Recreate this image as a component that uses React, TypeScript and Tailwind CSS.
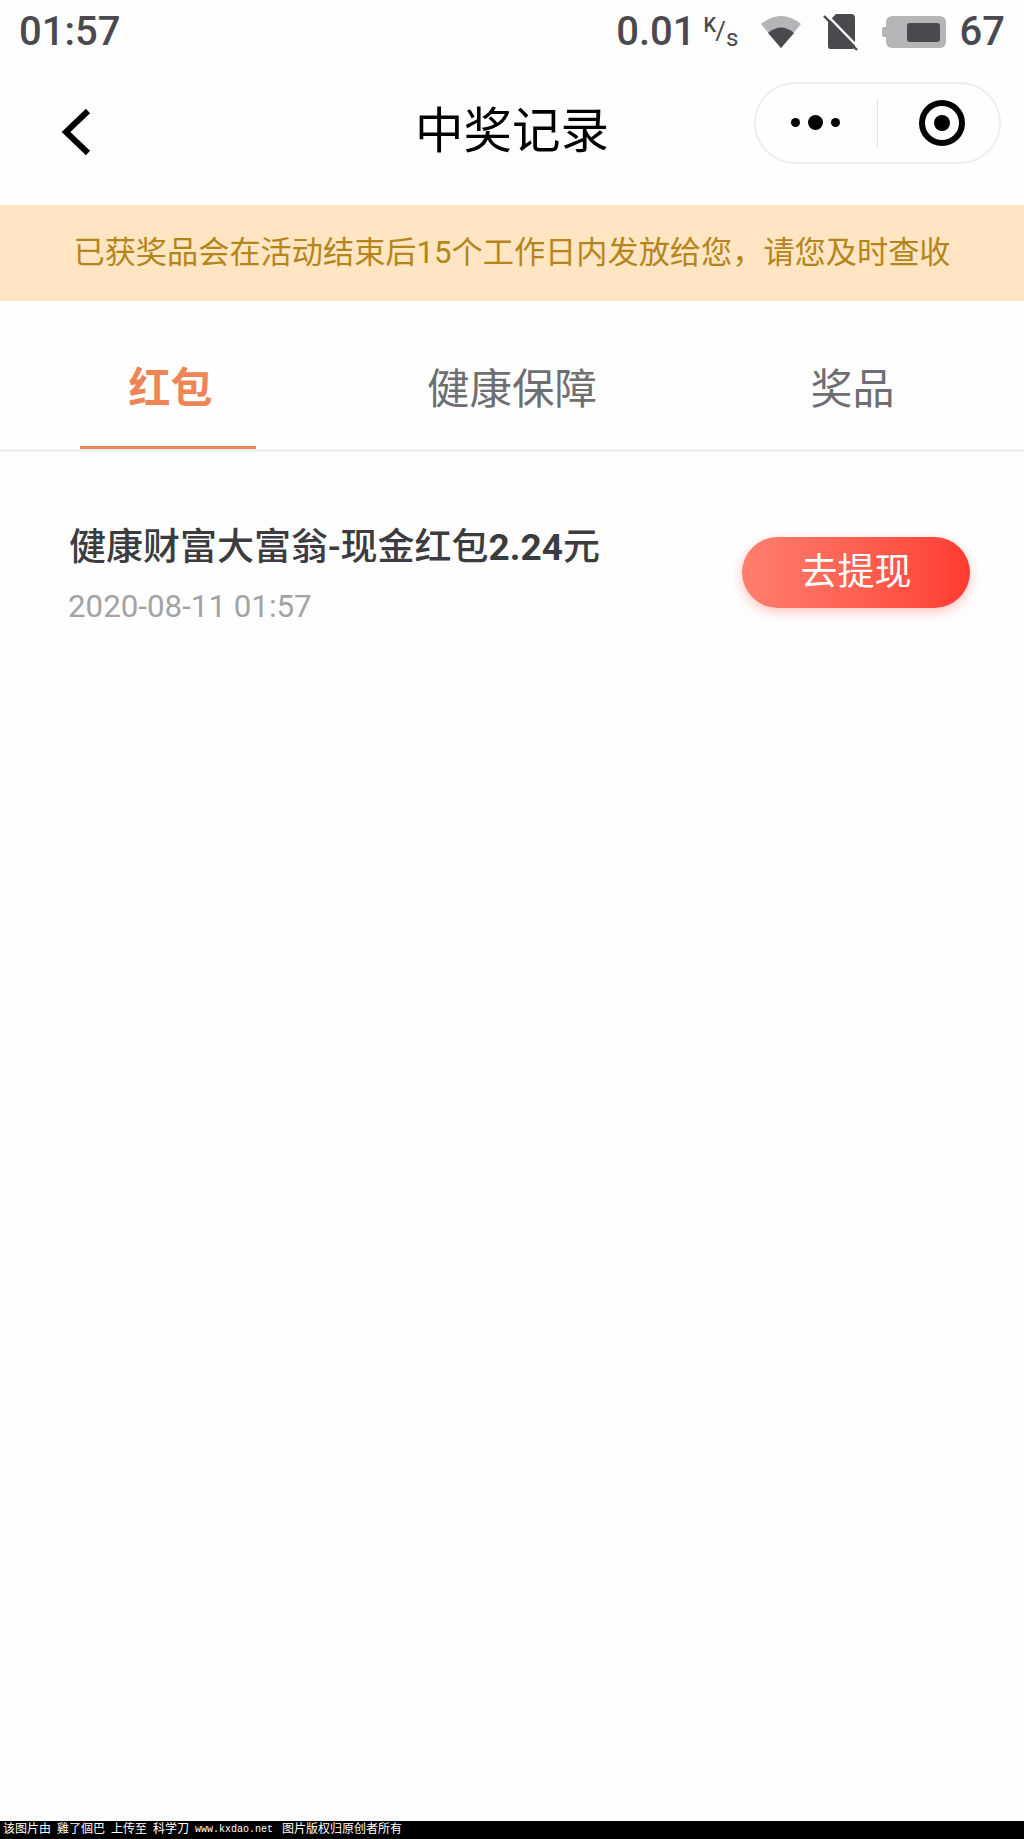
const cjk = "font-['Roboto','Noto_Sans_CJK_SC',sans-serif]";

function StatusBar() {
  return (
    <div className="flex h-[60px] items-center justify-between pl-[19px] pr-[19px] pt-[4px] text-[#4a4a4e]">
      <span className="text-[40px] font-medium leading-none">01:57</span>
      <div className="flex items-center">
        <span className="text-[40px] font-medium leading-none">0.01</span>
        <span className="ml-[8px] flex h-[32px] w-[36px] items-start font-medium leading-none">
          <span className="mt-[-1px] text-[20px]">K</span>
          <span className="mt-[2px] ml-[-1px] text-[26px] font-normal">/</span>
          <span className="mt-[10px] text-[24px] font-normal">s</span>
        </span>
        <svg className="ml-[20px]" width="42" height="36" viewBox="0 0 42 36">
          <path d="M1 10 Q21 -6 41 10 L21 34 Z" fill="#b5b4b6" />
          <path d="M8 19 Q21 8 34 19 L21 34 Z" fill="#4a4a4e" />
        </svg>
        <svg className="ml-[20px]" width="38" height="38" viewBox="0 0 38 38">
          <path d="M14 1 H29 Q33 1 33 5 V33 Q33 36 30 36 H8 Q6 36 6 33 V9 Z" fill="#4a4a4e" />
          <path d="M4 1 L36 34" stroke="#fff" strokeWidth="2.5" />
          <path d="M2 3 L35 37" stroke="#4a4a4e" strokeWidth="2.5" />
        </svg>
        <svg className="ml-[22px]" width="64" height="32" viewBox="0 0 64 32">
          <rect x="0" y="11" width="6" height="10" rx="2" fill="#b5b4b6" />
          <rect x="4" y="0" width="60" height="32" rx="6" fill="#b5b4b6" />
          <rect x="25" y="7" width="33" height="19" rx="3" fill="#4a4a4e" />
        </svg>
        <span className="ml-[14px] text-[40px] font-medium leading-none">67</span>
      </div>
    </div>
  );
}

function NavBar() {
  return (
    <div className="grid h-[145px] grid-cols-[1fr_auto_1fr] items-center">
      <div className="pl-[60px]">
        <svg className="mb-[2px] block" width="32" height="48" viewBox="0 0 32 48" fill="none">
          <path d="M28 3 L6 24 L28 45" stroke="#000" strokeWidth="6" />
        </svg>
      </div>
      <div className="mt-[-1px] text-[48.5px] leading-none text-black">中奖记录</div>
      <div className="flex justify-end pr-[23px]">
        <div className="mb-[20px] flex h-[82px] w-[247px] items-center rounded-full border-2 border-[#eeeeee]">
          <div className="flex w-[121px] items-center justify-center gap-[8px] pr-[3px]">
            <span className="h-[9px] w-[9px] rounded-full bg-black" />
            <span className="h-[15px] w-[15px] rounded-full bg-black" />
            <span className="h-[9px] w-[9px] rounded-full bg-black" />
          </div>
          <div className="h-[48px] w-[1px] bg-[#e2e2e2]" />
          <div className="flex flex-1 items-center justify-center pl-[6px]">
            <div className="flex h-[46px] w-[46px] items-center justify-center rounded-full border-[6px] border-black">
              <span className="h-[16px] w-[16px] rounded-full bg-black" />
            </div>
          </div>
        </div>
      </div>
    </div>
  );
}

function Tabs() {
  return (
    <div className="flex h-[151px] border-b-[3px] border-[#f0f0f2]">
      <div className="flex w-[336px] flex-col items-center">
        <div className="flex h-[148px] w-[176px] items-center justify-center border-b-[3px] border-[#ef8557] pl-[5px] pt-[30px] text-[42px] font-bold leading-none text-[#ef8557]">
          红包
        </div>
      </div>
      <div className="flex w-[352px] items-center justify-center pt-[30px] text-[42.5px] leading-none text-[#6e6e73]">健康保障</div>
      <div className="flex w-[336px] items-center justify-center pr-[7px] pt-[30px] text-[42px] leading-none text-[#6e6e73]">奖品</div>
    </div>
  );
}

function Row() {
  return (
    <div className="flex items-start justify-between pl-[69px] pr-[54px] pt-[69px]">
      <div>
        <div className="text-[37px] font-medium leading-[54px] text-[#3c3c40]">
          健康财富大富翁-现金红包<span className="font-bold">2.24</span>元
        </div>
        <div className="mt-[12px] ml-[-1px] text-[31.3px] leading-[40px] text-[#a3a3a6]">2020-08-11 01:57</div>
      </div>
      <div className="mt-[16px] flex h-[71px] w-[228px] items-center justify-center rounded-full bg-gradient-to-r from-[#ff7e6f] to-[#ff3a30] text-[37px] leading-none text-white shadow-[0_4px_12px_rgba(255,90,80,0.35)]">
        去提现
      </div>
    </div>
  );
}

export default function App() {
  return (
    <div className={`flex h-[1839px] w-[1024px] flex-col overflow-hidden bg-[#fefefe] ${cjk}`}>
      <StatusBar />
      <NavBar />
      <div className="flex h-[96px] items-center justify-center bg-[#ffe5c1] text-[31.2px] leading-none text-[#b5851c]">
        {"已获奖品会在活动结束后15个工作日内发放给您\uFF0C请您及时查收"}
      </div>
      <Tabs />
      <div className="flex-1">
        <Row />
      </div>
      <div className="flex h-[18px] items-center whitespace-pre bg-black pl-[3px] font-['Liberation_Mono','Noto_Sans_CJK_SC',monospace] text-[12px] leading-none text-white [word-spacing:-1.2px]">
        该图片由 雞了個巴 上传至 科学刀 <span className="mr-[3px] text-[10px]">www.kxdao.net</span> 图片版权归原创者所有
      </div>
    </div>
  );
}
